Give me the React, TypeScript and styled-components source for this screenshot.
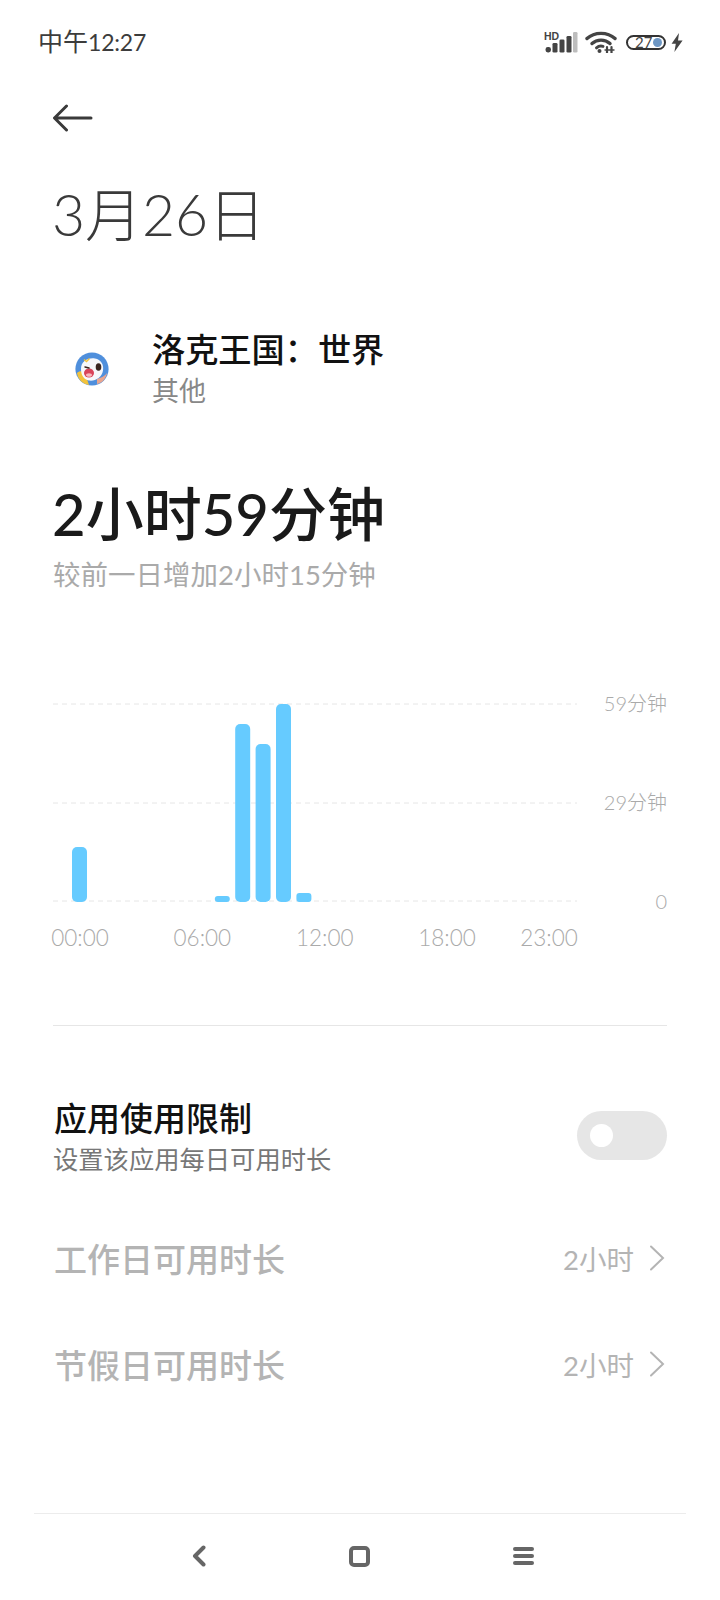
import React from 'react'
import styled, { createGlobalStyle } from 'styled-components'

const GlobalStyle = createGlobalStyle`
  html, body {
    margin: 0;
    padding: 0;
    background: #fff;
  }
  body {
    font-family: Lato, 'Noto Sans CJK SC', sans-serif;
  }
`

const BARS = [
  { hour: 0, height: 55 },
  { hour: 7, height: 6 },
  { hour: 8, height: 178 },
  { hour: 9, height: 158 },
  { hour: 10, height: 198 },
  { hour: 11, height: 9 },
]

const X_LABELS = [
  { hour: 0, text: '00:00' },
  { hour: 6, text: '06:00' },
  { hour: 12, text: '12:00' },
  { hour: 18, text: '18:00' },
  { hour: 23, text: '23:00' },
]

const StatusIcons = () => (
  <StatusRight>
    <SignalIcon width="34" height="22" viewBox="0 0 34 22">
      <text x="0" y="8.500" fontFamily="Liberation Sans" fontWeight="700" fontSize="10.500" fill="#444">HD</text>
      <rect x="1.500" y="16" width="5.500" height="5.500" rx="2.400" fill="#444" />
      <rect x="8.500" y="12" width="5" height="9.500" rx="1.300" fill="#444" />
      <rect x="15.500" y="8.500" width="5" height="13" rx="1.300" fill="#444" />
      <rect x="22.500" y="5" width="5" height="16.500" rx="1.300" fill="#444" />
      <rect x="29" y="1" width="4.500" height="20.500" rx="1.300" fill="#bdbdbd" />
    </SignalIcon>
    <svg width="32" height="22" viewBox="0 0 32 22" fill="none" stroke="#444" strokeLinecap="round">
      <path d="M2 7.500C9.500.6 22.500.6 30 7.500" strokeWidth="3.400" />
      <path d="M7 12.500C12 8 20 8 25 12.500" strokeWidth="3.400" />
      <path d="M11.500 16.800c2-1.700 4.500-2 6.500-1.400" strokeWidth="3" />
      <circle cx="14.500" cy="20" r="2" fill="#444" stroke="none" />
      <path d="M22 16v6M26.500 16v6" strokeWidth="2.200" />
      <path d="M20 19h9" strokeWidth="1.400" />
    </svg>
    <Battery>
      <BatteryText>27</BatteryText>
      <BatteryDot />
    </Battery>
    <BoltIcon width="12" height="19" viewBox="0 0 12 19">
      <path d="M8 0 .6 10.800h4.200L3.400 19 11.600 7.400H7z" fill="#444" />
    </BoltIcon>
  </StatusRight>
)

const AppIcon = () => (
  <svg width="34" height="34" viewBox="0 0 34 34">
    <circle cx="17" cy="17" r="16.600" fill="#4f8fdc" />
    <path d="M2 21c3-3 8-2 9 3l3 9C8 32 3 28 2 21z" fill="#f2c33c" />
    <path d="M22 27c4-1 8-3 10-6-1 6-5 10-10 11z" fill="#e9a58e" />
    <path d="M6 17C6 9 13 5.500 20 6.500c6 1 9 6 8 12-1 7-8 11-14 10-5-1-8-5-8-11.500z" fill="#f7f8fb" />
    <path d="M9 7.500l2.500 2 3-3" fill="none" stroke="#f2c33c" strokeWidth="1.400" />
    <ellipse cx="14" cy="21" rx="5" ry="4.500" fill="#d9445a" />
    <ellipse cx="14" cy="23" rx="3" ry="1.800" fill="#f7b7bd" />
    <ellipse cx="23.500" cy="15" rx="2.800" ry="3.800" fill="#3a2620" />
    <path d="M10 15l4 1" stroke="#3a2620" strokeWidth="1.500" strokeLinecap="round" />
  </svg>
)

const UsageChart = () => (
  <ChartWrap>
    <ChartRow>
      <svg width="524" height="200" viewBox="0 0 524 200">
        {[1, 100, 198].map((y) => (
          <line key={y} x1="0" x2="524" y1={y} y2={y} stroke="#e6e6e6" strokeWidth="1" strokeDasharray="5 4" />
        ))}
        {BARS.map((bar) => (
          <rect
            key={bar.hour}
            x={19 + bar.hour * 20.4}
            y={199 - bar.height}
            width="15"
            height={bar.height}
            rx={bar.height < 10 ? 3 : 5}
            fill="#66cbff"
          />
        ))}
      </svg>
      <YAxis>
        <YLabel>59分钟</YLabel>
        <YLabel>29分钟</YLabel>
        <YLabel>0</YLabel>
      </YAxis>
    </ChartRow>
    <XAxis>
      {X_LABELS.map((label) => (
        <XCell key={label.hour} $hour={label.hour}>
          <span>{label.text}</span>
        </XCell>
      ))}
    </XAxis>
  </ChartWrap>
)

const LimitRow = ({ label }: { label: string }) => (
  <Row>
    <RowLabel>{label}</RowLabel>
    <RowValue>
      2小时
      <svg width="16" height="26" viewBox="0 0 16 26" fill="none" stroke="#b4b4b4" strokeWidth="2" strokeLinecap="round">
        <path d="M2 1.500 14 13 2 24.500" />
      </svg>
    </RowValue>
  </Row>
)

export default function App() {
  return (
    <Page>
      <GlobalStyle />
      <StatusBar>
        <Clock>
          中午<ClockTime>12:27</ClockTime>
        </Clock>
        <StatusIcons />
      </StatusBar>

      <BackButton>
        <svg width="41" height="28" viewBox="0 0 41 28" fill="none" stroke="#3a3a3a" strokeWidth="3" strokeLinecap="round" strokeLinejoin="round">
          <path d="M39 14H3M14.500 2 2.500 14l12 12" />
        </svg>
      </BackButton>

      <DateTitle>3月26日</DateTitle>

      <AppRow>
        <IconBox>
          <AppIcon />
        </IconBox>
        <div>
          <AppName>洛克王国：世界</AppName>
          <AppCategory>其他</AppCategory>
        </div>
      </AppRow>

      <Total>2小时59分钟</Total>
      <Compare>较前一日增加2小时15分钟</Compare>

      <UsageChart />

      <Divider />

      <ToggleRow>
        <div>
          <ToggleTitle>应用使用限制</ToggleTitle>
          <ToggleHint>设置该应用每日可用时长</ToggleHint>
        </div>
        <Toggle>
          <Knob />
        </Toggle>
      </ToggleRow>

      <RowList>
        <LimitRow label="工作日可用时长" />
        <LimitRow label="节假日可用时长" />
      </RowList>

      <NavBar>
        <svg width="14" height="22" viewBox="0 0 14 22" fill="none" stroke="#666" strokeWidth="4" strokeLinecap="round" strokeLinejoin="round">
          <path d="M11.500 2.500 3 11l8.500 8.500" />
        </svg>
        <HomeIcon />
        <MenuIcon>
          <MenuLine />
          <MenuLine />
          <MenuLine />
        </MenuIcon>
      </NavBar>
    </Page>
  )
}

const Page = styled.div`
  position: relative;
  display: flex;
  flex-direction: column;
  width: 720px;
  height: 1600px;
  overflow: hidden;
  background: #fff;
`

const StatusBar = styled.div`
  display: flex;
  justify-content: space-between;
  align-items: center;
  height: 84px;
  padding: 0 37px 0 38px;
  flex-shrink: 0;
`

const Clock = styled.div`
  margin-bottom: 4px;
  font-size: 25px;
  color: #3c3c3c;
`

const ClockTime = styled.span`
  font-size: 23px;
  letter-spacing: -0.2px;
`

const StatusRight = styled.div`
  display: flex;
  align-items: center;
  gap: 9px;
`

const SignalIcon = styled.svg`
  margin-right: -2px;
`

const Battery = styled.div`
  display: flex;
  align-items: center;
  justify-content: space-between;
  box-sizing: border-box;
  width: 40px;
  height: 15px;
  padding: 0 2px 0 7px;
  border: 2px solid #333;
  border-radius: 8px;
`

const BatteryText = styled.span`
  font-size: 15px;
  line-height: 11px;
  color: #444;
`

const BatteryDot = styled.span`
  width: 9px;
  height: 9px;
  border-radius: 50%;
  background: #6d97c4;
`

const BoltIcon = styled.svg`
  margin-left: -4px;
`

const BackButton = styled.div`
  display: flex;
  align-items: center;
  height: 68px;
  padding-left: 52px;
  flex-shrink: 0;
`

const DateTitle = styled.h1`
  margin: 27px 0 0 52px;
  font-size: 57px;
  line-height: 70px;
  font-weight: 300;
  color: #3a3a3a;
`

const AppRow = styled.div`
  display: flex;
  align-items: center;
  margin-top: 78px;
  padding-left: 75px;
`

const IconBox = styled.div`
  display: flex;
  width: 77px;
`

const AppName = styled.div`
  font-size: 33.200px;
  line-height: 45px;
  font-weight: 500;
  color: #111;
`

const AppCategory = styled.div`
  font-size: 27px;
  line-height: 38px;
  color: #888;
`

const Total = styled.div`
  margin: 67px 0 0 52px;
  font-size: 58px;
  line-height: 74px;
  font-weight: 500;
  color: #1a1a1a;
`

const Compare = styled.div`
  margin: 5px 0 0 53px;
  font-size: 27.500px;
  line-height: 38px;
  color: #aaa;
`

const ChartWrap = styled.div`
  margin: 109px 0 0 53px;
`

const ChartRow = styled.div`
  display: flex;
  width: 614px;
  justify-content: space-between;
`

const YAxis = styled.div`
  display: flex;
  flex-direction: column;
  justify-content: space-between;
  align-items: flex-end;
  height: 198px;
`

const YLabel = styled.div`
  font-size: 20px;
  font-weight: 300;
  line-height: 0;
  color: #aaa;
`

const XAxis = styled.div`
  display: grid;
  grid-template-columns: repeat(24, 20.400px);
  margin-top: 19px;
  padding-left: 16.800px;
`

const XCell = styled.div<{ $hour: number }>`
  grid-column: ${({ $hour }) => $hour + 1};
  grid-row: 1;
  display: flex;
  justify-content: center;
  font-size: 22.500px;
  font-weight: 300;
  line-height: 32px;
  color: #aaa;
  white-space: nowrap;
`

const Divider = styled.div`
  height: 1px;
  margin: 71px 53px 0;
  background: #e6e6e6;
`

const ToggleRow = styled.div`
  display: flex;
  justify-content: space-between;
  align-items: center;
  margin-top: 70px;
  padding: 0 53px 0 54px;
`

const ToggleTitle = styled.div`
  font-size: 33px;
  line-height: 44px;
  font-weight: 500;
  color: #111;
`

const ToggleHint = styled.div`
  margin-left: -1px;
  font-size: 25.300px;
  line-height: 38px;
  color: #777;
`

const Toggle = styled.div`
  display: flex;
  align-items: center;
  width: 90px;
  height: 49px;
  margin-bottom: 3px;
  padding-left: 13px;
  box-sizing: border-box;
  border-radius: 25px;
  background: #e6e6e6;
`

const Knob = styled.div`
  width: 23px;
  height: 23px;
  border-radius: 50%;
  background: #fff;
`

const RowList = styled.div`
  margin-top: 27px;
`

const Row = styled.div`
  display: flex;
  justify-content: space-between;
  align-items: center;
  height: 106px;
  padding: 0 55px 0 54px;
`

const RowLabel = styled.div`
  font-size: 33px;
  font-weight: 500;
  color: #b4b4b4;
`

const RowValue = styled.div`
  display: flex;
  align-items: center;
  gap: 15px;
  font-size: 27.500px;
  color: #b4b4b4;
`

const NavBar = styled.div`
  display: flex;
  justify-content: space-between;
  align-items: center;
  margin: auto 34px 0;
  height: 84px;
  padding: 0 152px 2px 158px;
  border-top: 1px solid #ececec;
`

const HomeIcon = styled.div`
  width: 21px;
  height: 21px;
  box-sizing: border-box;
  border: 4px solid #666;
  border-radius: 5px;
`

const MenuIcon = styled.div`
  display: flex;
  flex-direction: column;
  gap: 3px;
  width: 21px;
`

const MenuLine = styled.div`
  height: 4px;
  border-radius: 2px;
  background: #666;
`
